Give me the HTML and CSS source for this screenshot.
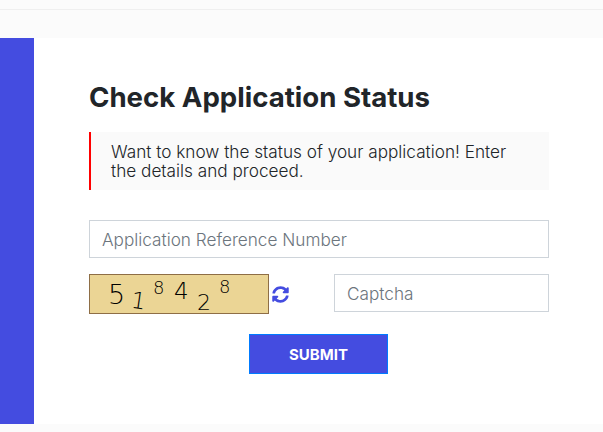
FILE: index.html
```html
<!DOCTYPE html>
<html lang="en">
<head>
  <meta charset="UTF-8">
  <meta name="viewport" content="width=device-width, initial-scale=1.0">
  <title>Check Application Status</title>
  <link rel="stylesheet" href="styles.css">
</head>
<body>
  <div class="top-strip"></div>
  <div class="page-row">
    <div class="side-bar"></div>
    <div class="panel">
      <h1>Check Application Status</h1>
      <p class="notice">Want to know the status of your application! Enter the details and proceed.</p>
      <form class="status-form">
        <input class="field" type="text" placeholder="Application Reference Number">
        <div class="captcha-row">
          <div class="captcha-left">
            <div class="captcha-img">
              <span class="d d1">5</span>
              <span class="d d2">1</span>
              <span class="d d3">8</span>
              <span class="d d4">4</span>
              <span class="d d5">2</span>
              <span class="d d6">8</span>
            </div>
            <!-- refresh icon -->
            <svg class="refresh" viewBox="0 0 512 512" width="17" height="17">
              <path fill="#444ce0" d="M370.7 133.3C339.5 104 298.9 88 255.800 88c-77.500.100-144.300 53.200-162.800 126.900-1.300 5.400-6.100 9.200-11.700 9.200H24.100c-7.500 0-13.200-6.800-11.800-14.200C33.900 94.900 134.800 8 256 8c66.400 0 126.800 26.100 171.300 68.700L463 41c15.100-15.100 41-4.400 41 17v134c0 13.300-10.700 24-24 24H346c-21.400 0-32.100-25.900-17-41l41.700-41.700zM32 296h134c21.400 0 32.100 25.900 17 41l-41.700 41.700c31.200 29.300 71.800 45.300 114.900 45.300 77.400-.100 144.300-53.100 162.800-126.800 1.300-5.400 6.100-9.200 11.700-9.200h57.300c7.500 0 13.200 6.800 11.800 14.200C478.100 417.100 377.200 504 256 504c-66.400 0-126.800-26.100-171.300-68.700L49 471c-15.100 15.100-41 4.400-41-17V320c0-13.300 10.700-24 24-24z"/>
            </svg>
          </div>
          <input class="field captcha-field" type="text" placeholder="Captcha">
        </div>
        <div class="submit-row">
          <button class="submit-btn" type="button">SUBMIT</button>
        </div>
      </form>
    </div>
  </div>
</body>
</html>
```

FILE: styles.css
```css
* {
  box-sizing: border-box;
}
body {
  margin: 0;
  height: 432px;
  overflow: hidden;
  background-color: #fbfbfb;
  font-family: "Inter", Arial, sans-serif;
  color: #212529;
}
.top-strip {
  height: 38px;
  border-top: 9px solid #fbfbfb;
  background-color: #fbfbfb;
  box-shadow: inset 0 1px 0 #efefef;
}
.page-row {
  display: flex;
  height: 386px;
}
.side-bar {
  width: 34px;
  background-color: #444ce0;
}
.panel {
  flex: 1;
  background-color: #fff;
  padding: 40px 54px 0 55px;
}
h1 {
  margin: 0;
  font-size: 27.6px;
  line-height: 38px;
  font-weight: 700;
  color: #212529;
}
.notice {
  margin: 16px 0 0;
  padding: 10px 40px 10px 20px;
  border-left: 2px solid #ff0000;
  background-color: #fafafa;
  font-size: 17.2px;
  font-weight: 300;
  line-height: 19px;
  color: #212529;
}
.status-form {
  margin-top: 30px;
}
.field {
  display: block;
  width: 100%;
  height: 38px;
  padding: 0 12px;
  border: 1px solid #ced4da;
  background-color: #fff;
  font-family: "Inter", Arial, sans-serif;
  font-size: 17.2px;
  font-weight: 300;
  outline: none;
}
.field::placeholder {
  color: #6c757d;
  opacity: 1;
}
.captcha-row {
  display: grid;
  grid-template-columns: 245px 215px;
  margin-top: 16px;
}
.captcha-left {
  display: flex;
  align-items: center;
  gap: 3px;
}
.captcha-img {
  display: flex;
  width: 180px;
  height: 40px;
  padding-left: 18px;
  border: 1px solid #8e6e46;
  background-color: #ebd595;
  font-family: "DejaVu Sans", sans-serif;
  font-weight: 200;
  color: #000;
}
.d {
  display: block;
  line-height: 0.8;
}
.d1 { font-size: 27px; margin-top: 9px; width: 23px; }
.d2 { font-size: 23px; margin-top: 17px; width: 22px; transform: rotate(8deg); }
.d3 { font-size: 18px; margin-top: 6px; width: 21px; }
.d4 { font-size: 23px; margin-top: 7px; width: 23px; }
.d5 { font-size: 22px; margin-top: 19px; width: 22px; }
.d6 { font-size: 18px; margin-top: 5px; width: 14px; }
.refresh {
  display: block;
}
.captcha-field {
  height: 38px;
}
.submit-row {
  display: flex;
  justify-content: flex-start;
  margin: 20px 0 0 160px;
}
.submit-btn {
  width: 139px;
  height: 40px;
  border: 1px solid #007bff;
  background-color: #444ce0;
  color: #fff;
  font-family: "Inter", Arial, sans-serif;
  font-size: 15px;
  font-weight: 700;
}
```
